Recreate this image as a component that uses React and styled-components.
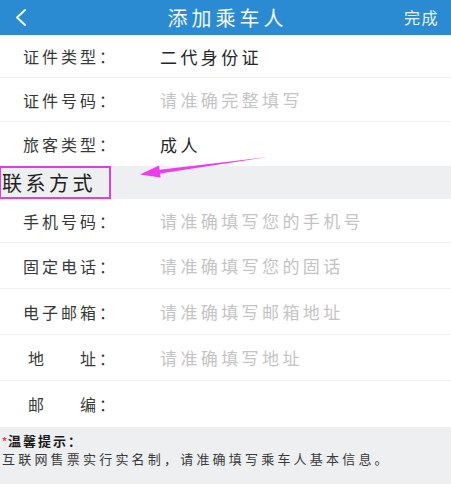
import React from "react";
import styled, { createGlobalStyle } from "styled-components";

const Global = createGlobalStyle`
  html, body { margin: 0; padding: 0; background: #ffffff; }
  body { font-family: "Noto Sans CJK SC", "Noto Sans", sans-serif; }
  * { box-sizing: border-box; }
`;

const Page = styled.div`
  position: relative;
  width: 451px;
  height: 484px;
  overflow: hidden;
  display: flex;
  flex-direction: column;
  background: #ffffff;
`;

const Header = styled.header`
  height: 35px;
  flex: none;
  background: #2a8bd3;
  display: grid;
  grid-template-columns: 80px 1fr 80px;
  align-items: center;
  color: #ffffff;
`;

const Back = styled.div`
  padding-left: 14px;
  display: flex;
  align-items: center;
  height: 35px;
  padding-bottom: 4px;
`;

const Title = styled.div`
  text-align: center;
  font-size: 20px;
  letter-spacing: 4px;
  padding-left: 4px;
  line-height: 35px;
  padding-bottom: 3px;
  color: #f4f8fc;
`;

const Done = styled.div`
  text-align: right;
  padding-right: 12px;
  font-size: 16px;
  letter-spacing: 1.5px;
  line-height: 35px;
  padding-bottom: 3px;
  color: #eaf3fb;
`;

const Row = styled.div`
  height: ${(p) => p.$h}px;
  flex: none;
  display: flex;
  align-items: center;
  border-bottom: ${(p) => (p.$last ? "none" : "1px solid #f1f2f4")};
  background: #ffffff;
`;

const Label = styled.div`
  width: 160px;
  flex: none;
  padding-left: ${(p) => (p.$spread ? 28 : 23)}px;
  font-size: 16px;
  letter-spacing: 3px;
  color: #383838;
  display: flex;
  gap: ${(p) => (p.$spread ? 33 : 0)}px;
  white-space: nowrap;
`;

const Value = styled.div`
  font-size: 17px;
  letter-spacing: 3.4px;
  color: ${(p) => (p.$placeholder ? "#c4c4c4" : "#262626")};
  white-space: nowrap;
`;

const Section = styled.div`
  height: 33px;
  flex: none;
  background: #eeeff1;
  display: flex;
  align-items: flex-start;
`;

const SectionTitle = styled.div`
  width: 111px;
  height: 33px;
  border: 2px solid #e03fe0;
  border-left-width: 1px;
  display: flex;
  align-items: center;
  padding-left: 1px;
  font-size: 20px;
  letter-spacing: 3.5px;
  color: #222222;
  white-space: nowrap;
`;

const Tips = styled.div`
  flex: 1;
  background: #eeeff0;
  padding: 5px 0 0 2px;
  font-size: 13px;
  line-height: 18px;
  color: #3a3a3a;
`;

const TipTitle = styled.div`
  height: 18px;
  font-weight: 700;
  letter-spacing: 2px;
  color: #1a1a1a;
  display: flex;
  align-items: center;
`;

const Star = styled.span`
  color: #e23a3a;
  font-size: 10px;
  font-weight: 700;
  letter-spacing: 0;
  margin-right: 1px;
`;

const TipText = styled.div`
  height: 18px;
  letter-spacing: 3.2px;
  white-space: nowrap;
`;

const Overlay = styled.svg`
  position: absolute;
  left: 0;
  top: 0;
  pointer-events: none;
`;

const topRows = [
  { label: "证件类型：", value: "二代身份证" },
  { label: "证件号码：", value: "请准确完整填写", ph: true },
  { label: "旅客类型：", value: "成人" },
];

const contactRows = [
  { label: "手机号码：", value: "请准确填写您的手机号", ph: true },
  { label: "固定电话：", value: "请准确填写您的固话", ph: true },
  { label: "电子邮箱：", value: "请准确填写邮箱地址", ph: true },
  { spread: ["地", "址："], value: "请准确填写地址", ph: true },
  { spread: ["邮", "编："], value: "" },
];

function FieldRow({ r, h, last }) {
  return (
    <Row $h={h} $last={last}>
      {r.spread ? (
        <Label $spread>
          <span>{r.spread[0]}</span>
          <span>{r.spread[1]}</span>
        </Label>
      ) : (
        <Label>{r.label}</Label>
      )}
      <Value $placeholder={r.ph}>{r.value}</Value>
    </Row>
  );
}

export default function App() {
  return (
    <>
      <Global />
      <Page>
        <Header>
          <Back>
            <svg width="14" height="18" viewBox="0 0 14 18">
              <polyline
                points="11,2 3,9.5 11,17"
                fill="none"
                stroke="#ffffff"
                strokeWidth="1.8"
                strokeLinecap="round"
                strokeLinejoin="round"
              />
            </svg>
          </Back>
          <Title>添加乘车人</Title>
          <Done>完成</Done>
        </Header>
        {topRows.map((r, i) => (
          <FieldRow key={i} r={r} h={i === 0 ? 43 : 44} last={i === topRows.length - 1} />
        ))}
        <Section>
          <SectionTitle>联系方式</SectionTitle>
        </Section>
        {contactRows.map((r, i) => (
          <FieldRow key={i} r={r} h={i === 0 ? 44 : 46} last={i === contactRows.length - 1} />
        ))}
        <Tips>
          <TipTitle>
            <Star>*</Star>温馨提示：
          </TipTitle>
          <TipText>互联网售票实行实名制，请准确填写乘车人基本信息。</TipText>
        </Tips>
        <Overlay width="451" height="484" viewBox="0 0 451 484">
          <polygon
            points="140,174.5 159,165.5 159.6,169.8 268,157 160,173.4 160.6,177.6"
            fill="#ee3cee"
          />
        </Overlay>
      </Page>
    </>
  );
}
